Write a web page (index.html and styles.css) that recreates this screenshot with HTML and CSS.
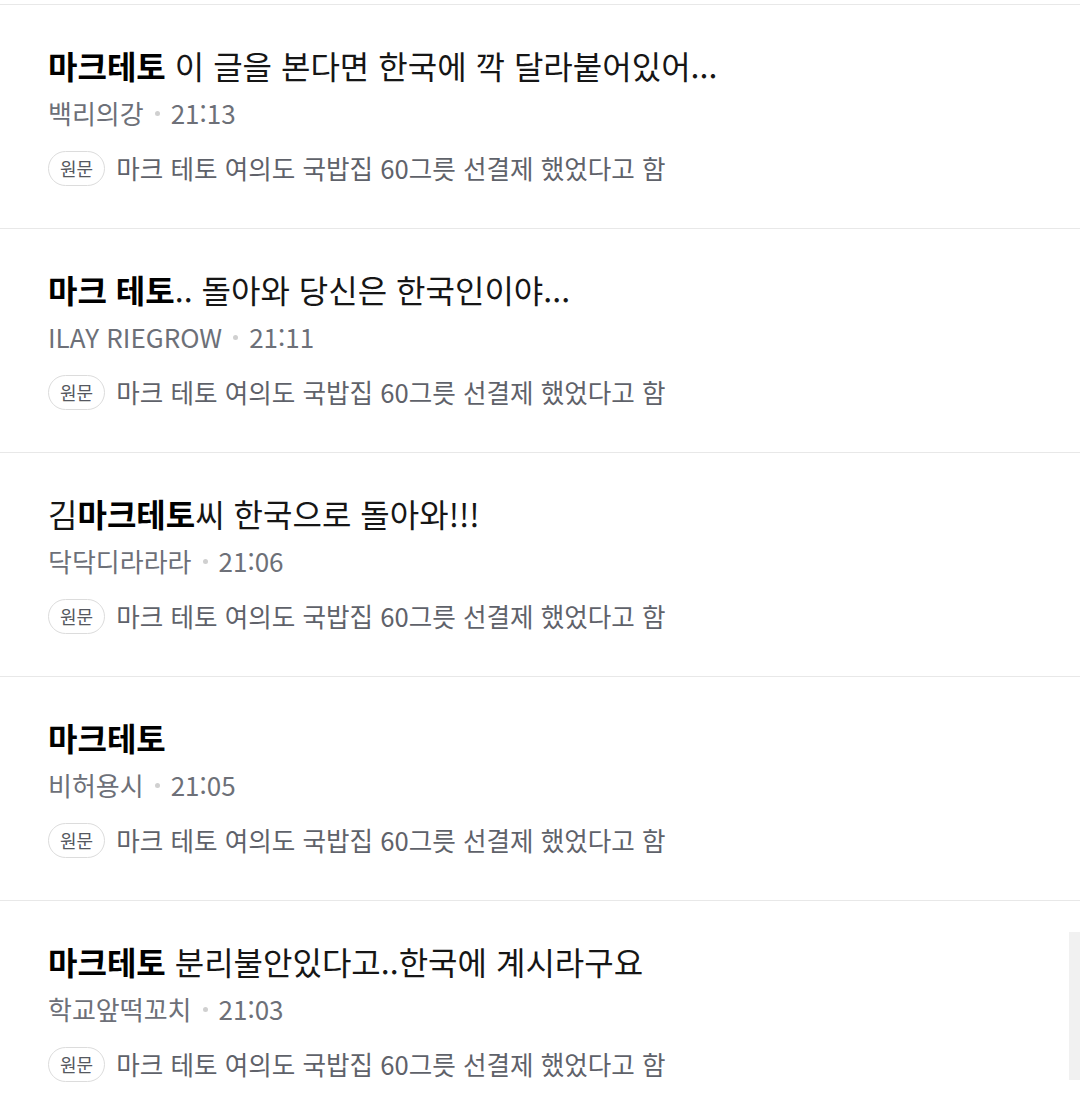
FILE: index.html
```html
<!DOCTYPE html>
<html lang="ko">
<head>
    <meta charset="utf-8">
    <title>마크테토</title>
    <link rel="stylesheet" href="styles.css">
</head>
<body>
<div class="list">
    <div class="item">
        <div class="title"><b>마크테토</b> 이 글을 본다면 한국에 깍 달라붙어있어...</div>
        <div class="meta"><span>백리의강</span><span class="dot"></span><span>21:13</span></div>
        <div class="src"><span class="badge">원문</span><span>마크 테토 여의도 국밥집 60그릇 선결제 했었다고 함</span></div>
    </div>
    <div class="item">
        <div class="title"><b>마크 테토</b>.. 돌아와 당신은 한국인이야...</div>
        <div class="meta"><span>ILAY RIEGROW</span><span class="dot"></span><span>21:11</span></div>
        <div class="src"><span class="badge">원문</span><span>마크 테토 여의도 국밥집 60그릇 선결제 했었다고 함</span></div>
    </div>
    <div class="item">
        <div class="title">김<b>마크테토</b>씨 한국으로 돌아와!!!</div>
        <div class="meta"><span>닥닥디라라라</span><span class="dot"></span><span>21:06</span></div>
        <div class="src"><span class="badge">원문</span><span>마크 테토 여의도 국밥집 60그릇 선결제 했었다고 함</span></div>
    </div>
    <div class="item">
        <div class="title"><b>마크테토</b></div>
        <div class="meta"><span>비허용시</span><span class="dot"></span><span>21:05</span></div>
        <div class="src"><span class="badge">원문</span><span>마크 테토 여의도 국밥집 60그릇 선결제 했었다고 함</span></div>
    </div>
    <div class="item">
        <div class="title"><b>마크테토</b> 분리불안있다고..한국에 계시라구요</div>
        <div class="meta"><span>학교앞떡꼬치</span><span class="dot"></span><span>21:03</span></div>
        <div class="src"><span class="badge">원문</span><span>마크 테토 여의도 국밥집 60그릇 선결제 했었다고 함</span></div>
    </div>
</div>
<div class="scrollbar"></div>
</body>
</html>
```
FILE: styles.css
```css
html, body
{
    margin:0;
    padding:0;
    background:#ffffff;
    overflow:hidden;
}

body
{
    font-family:"Noto Sans CJK KR", "Noto Sans", sans-serif;
    padding-top:4px;
}

.item
{
    border-top:1px solid #e8e8e8;
    padding:39px 48px 41px 48px;
    height:143px;
}

.title
{
    font-size:32px;
    line-height:42px;
    color:#161616;
    white-space:nowrap;
}

.title b
{
    font-weight:700;
    color:#000000;
}

.meta
{
    display:flex;
    align-items:center;
    margin-top:9px;
    font-size:26px;
    line-height:36px;
    color:#6d7078;
}

.dot
{
    width:5px;
    height:5px;
    border-radius:50%;
    background:#d0d0d0;
    margin:0 11px;
}

.src
{
    display:flex;
    align-items:center;
    margin-top:19px;
    font-size:25.6px;
    line-height:36px;
    color:#5f626a;
}

.badge
{
    box-sizing:border-box;
    height:35px;
    padding:0 11px;
    border:1px solid #dcdcdc;
    border-radius:18px;
    font-size:18px;
    line-height:33px;
    color:#555860;
    margin-right:11px;
}

.scrollbar
{
    position:absolute;
    right:0;
    top:932px;
    width:11px;
    height:148px;
    background:#f1f1f1;
}
```
